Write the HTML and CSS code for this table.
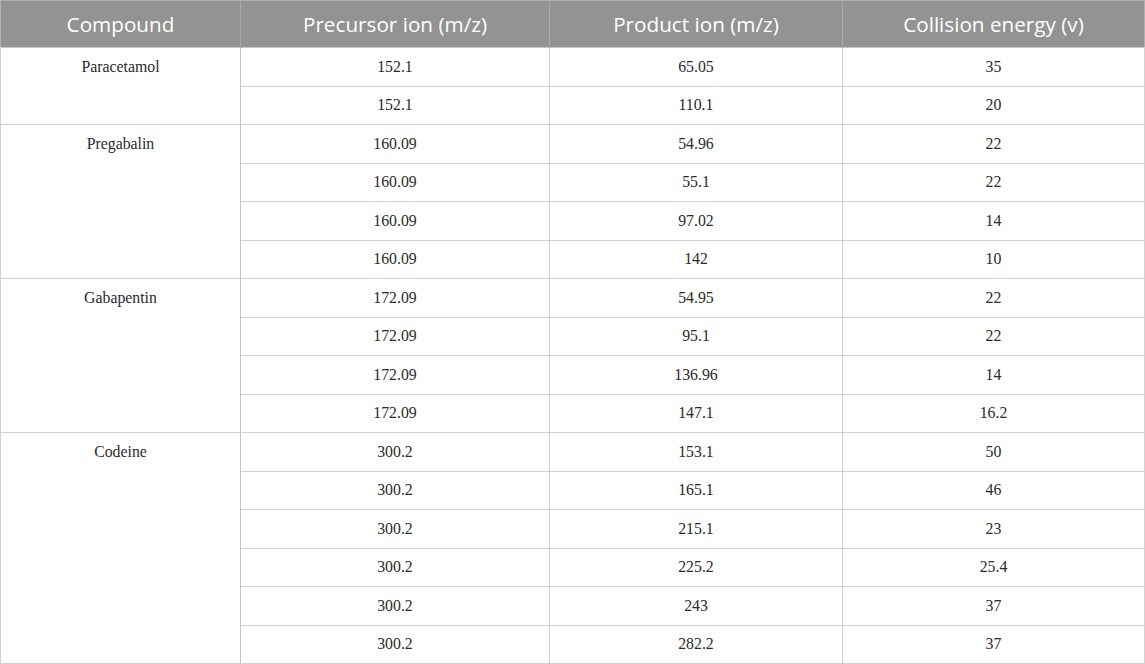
FILE: index.html
```html
<!DOCTYPE html>
<html>
<head>
<meta charset="utf-8">
<link rel="stylesheet" href="styles.css">
</head>
<body>
<table class="data">
  <colgroup>
    <col class="c1"><col class="c2"><col class="c3"><col class="c4">
  </colgroup>
  <thead>
    <tr><th>Compound</th><th>Precursor ion (m/z)</th><th>Product ion (m/z)</th><th>Collision energy (v)</th></tr>
  </thead>
  <tbody>
    <tr class="grp"><td class="name" rowspan="2">Paracetamol</td><td>152.1</td><td>65.05</td><td>35</td></tr>
    <tr><td>152.1</td><td>110.1</td><td>20</td></tr>
    <tr class="grp"><td class="name" rowspan="4">Pregabalin</td><td>160.09</td><td>54.96</td><td>22</td></tr>
    <tr><td>160.09</td><td>55.1</td><td>22</td></tr>
    <tr><td>160.09</td><td>97.02</td><td>14</td></tr>
    <tr><td>160.09</td><td>142</td><td>10</td></tr>
    <tr class="grp"><td class="name" rowspan="4">Gabapentin</td><td>172.09</td><td>54.95</td><td>22</td></tr>
    <tr><td>172.09</td><td>95.1</td><td>22</td></tr>
    <tr><td>172.09</td><td>136.96</td><td>14</td></tr>
    <tr><td>172.09</td><td>147.1</td><td>16.2</td></tr>
    <tr class="grp"><td class="name" rowspan="6">Codeine</td><td>300.2</td><td>153.1</td><td>50</td></tr>
    <tr><td>300.2</td><td>165.1</td><td>46</td></tr>
    <tr><td>300.2</td><td>215.1</td><td>23</td></tr>
    <tr><td>300.2</td><td>225.2</td><td>25.4</td></tr>
    <tr><td>300.2</td><td>243</td><td>37</td></tr>
    <tr><td>300.2</td><td>282.2</td><td>37</td></tr>
  </tbody>
</table>
</body>
</html>
```
FILE: styles.css
```css
html, body {
  margin: 0;
  padding: 0;
  background: #ffffff;
}
.data {
  width: 1144px;
  border-collapse: collapse;
  table-layout: fixed;
  border: 1px solid #b0b0b0;
}
.c1 { width: 240px; }
.c2 { width: 309px; }
.c3 { width: 293px; }
.c4 { width: 302px; }
.data th {
  background: #939393;
  color: #ffffff;
  font-family: "Open Sans", "Noto Sans", sans-serif;
  font-weight: 400;
  font-size: 20.7px;
  height: 47px;
  padding: 0;
  text-align: center;
  vertical-align: middle;
  border-left: 1px solid #a8a8a8;
  box-sizing: border-box;
}
.data th:first-child { border-left: none; }
.data td {
  font-family: "Liberation Serif", "Times New Roman", serif;
  font-size: 15.8px;
  color: #2a2a2a;
  text-align: center;
  vertical-align: middle;
  height: 38.5px;
  padding: 0;
  border: 1px solid #d2d2d2;
  box-sizing: border-box;
}
.data td.name {
  vertical-align: top;
  padding-top: 10px;
  border-right: 1px solid #c4c4c4;
}
.data tr.grp td {
  border-top: 1px solid #c8c8c8;
}
```
